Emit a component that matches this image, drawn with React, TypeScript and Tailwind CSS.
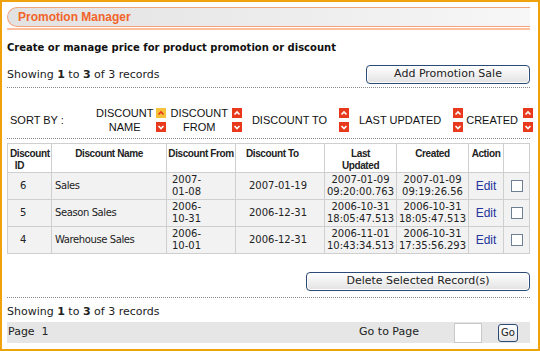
import React from 'react';

interface Promo {
  id: number;
  name: string;
  from: string[];
  to: string;
  updated: string[];
  created: string[];
}

const rows: Promo[] = [
  { id: 6, name: 'Sales', from: ['2007-', '01-08'], to: '2007-01-19', updated: ['2007-01-09', '09:20:00.763'], created: ['2007-01-09', '09:19:26.56'] },
  { id: 5, name: 'Season Sales', from: ['2006-', '10-31'], to: '2006-12-31', updated: ['2006-10-31', '18:05:47.513'], created: ['2006-10-31', '18:05:47.513'] },
  { id: 4, name: 'Warehouse Sales', from: ['2006-', '10-01'], to: '2006-12-31', updated: ['2006-11-01', '10:43:34.513'], created: ['2006-10-31', '17:35:56.293'] },
];

const arial = { fontFamily: '"Liberation Sans", Arial, sans-serif' };

// little red sort arrows
const SortIcon = ({ dir, active = false }: { dir: 'up' | 'down'; active?: boolean }) => (
  <svg width="10" height="10" viewBox="0 0 10 10" className="block">
    <rect width="10" height="10" fill={active ? '#f6c23a' : '#e8391c'} />
    <path
      d={dir === 'up' ? 'M2.5 6.5 L5 4 L7.5 6.5' : 'M2.5 4 L5 6.5 L7.5 4'}
      fill="none"
      stroke={active ? '#e8391c' : '#fff'}
      strokeWidth="1.6"
    />
  </svg>
);

const SortArrows = ({ active = false }: { active?: boolean }) => (
  <div className="flex flex-col gap-[4px] shrink-0">
    <SortIcon dir="up" active={active} />
    <SortIcon dir="down" />
  </div>
);

const Showing = () => (
  <p className="text-[11px] leading-[14px] text-[#222]">
    Showing <b>1</b> to <b>3</b> of 3 records
  </p>
);

const btn =
  'h-[19px] rounded-[4px] border border-[#2b4a75] bg-gradient-to-b from-white to-[#e2e2e2] text-[11px] text-[#222] shadow-[inset_0_0_0_1px_#fff]';

const App: React.FC = () => {
  const th = 'border border-[#cfcfcf] align-top pt-[4px] text-[10px] tracking-[-0.4px] font-bold text-[#222] leading-[12px]';
  const td = 'border border-[#cfcfcf] text-[10px] leading-[12px] text-[#222]';

  return (
    <div
      className="w-[540px] h-[351px] bg-white border-2 border-[#efa20b] overflow-hidden px-[5px] pt-[5px]"
      style={{ fontFamily: '"DejaVu Sans", Verdana, sans-serif' }}
    >
      {/* Title bar */}
      <div className="h-[20px] w-[523px] rounded-l-[10px] border border-[#f4a27a] border-r-0 bg-gradient-to-r from-[#e2e2e2] via-[#ececec] to-[#f7f7f7] flex items-center pl-[10px]">
        <span className="text-[12px] font-bold text-[#f2642a]" style={arial}>
          Promotion Manager
        </span>
      </div>
      <div className="h-[2px] w-[523px] bg-[#ffbf9c] mt-[1px]" />

      <p className="mt-[12px] text-[10px] leading-[12px] font-bold text-[#111]">
        Create or manage price for product promotion or discount
      </p>

      <div className="mt-[11px] h-[19px] flex items-center justify-between w-[523px]">
        <Showing />
        <button className={`${btn} w-[164px]`}>Add Promotion Sale</button>
      </div>

      <div className="mt-[3px] w-[523px] border-t border-dotted border-[#888]" />

      {/* Sort row */}
      <div className="h-[50px] pt-[14px] w-[523px] flex items-center text-[11px] leading-[14px] text-[#111]" style={arial}>
        <span className="ml-[3px] w-[86px] shrink-0">SORT BY :</span>
        <div className="flex items-center gap-[3px]">
          <span className="text-center whitespace-nowrap">DISCOUNT<br />NAME</span>
          <SortArrows active />
        </div>
        <div className="flex items-center gap-[4px] ml-[4px]">
          <span className="text-center whitespace-nowrap">DISCOUNT<br />FROM</span>
          <SortArrows />
        </div>
        <div className="flex items-center gap-[12px] ml-[10px]">
          <span className="whitespace-nowrap">DISCOUNT TO</span>
          <SortArrows />
        </div>
        <div className="flex items-center gap-[12px] ml-[10px]">
          <span className="whitespace-nowrap">LAST UPDATED</span>
          <SortArrows />
        </div>
        <div className="flex items-center gap-[5px] ml-[3px]">
          <span className="whitespace-nowrap">CREATED</span>
          <SortArrows />
        </div>
      </div>

      <div className="w-[523px] border-t border-dotted border-[#888]" />

      {/* Table */}
      <table className="mt-[4px] w-[522px] border-collapse table-fixed">
        <colgroup>
          <col className="w-[44px]" />
          <col className="w-[115px]" />
          <col className="w-[69px]" />
          <col className="w-[89px]" />
          <col className="w-[72px]" />
          <col className="w-[72px]" />
          <col className="w-[35px]" />
          <col className="w-[26px]" />
        </colgroup>
        <thead style={arial}>
          <tr className="h-[27px] bg-white">
            <th className={`${th} text-left pl-[2px]`}>
              Discount<br />&nbsp;&nbsp;ID
            </th>
            <th className={th}>Discount Name</th>
            <th className={`${th} whitespace-nowrap`}>Discount From</th>
            <th className={`${th} text-left pl-[10px]`}>Discount To</th>
            <th className={th}>
              Last<br />Updated
            </th>
            <th className={th}>Created</th>
            <th className={th}>Action</th>
            <th className={th}></th>
          </tr>
        </thead>
        <tbody>
          {rows.map((r) => (
            <tr key={r.id} className="h-[27px] bg-[#f2f2f2]">
              <td className={`${td} pl-[12px]`}>{r.id}</td>
              <td className={`${td} pl-[3px] text-[9px] tracking-[-0.4px] text-[#3a3a9a]`}>{r.name}</td>
              <td className={`${td} pl-[5px]`}>
                {r.from[0]}
                <br />
                {r.from[1]}
              </td>
              <td className={`${td} text-center pr-[4px]`}>{r.to}</td>
              <td className={`${td} text-center`}>
                {r.updated[0]}
                <br />
                {r.updated[1]}
              </td>
              <td className={`${td} text-center`}>
                {r.created[0]}
                <br />
                {r.created[1]}
              </td>
              <td className={`${td} text-center`}>
                <a className="text-[12px] text-[#24349c]" style={arial}>
                  Edit
                </a>
              </td>
              <td className={`${td} text-center`}>
                <span className="inline-block w-[12px] h-[12px] border border-[#6f7f93] bg-white align-middle" />
              </td>
            </tr>
          ))}
        </tbody>
      </table>

      <div className="mt-[18px] flex justify-end w-[523px]">
        <button className={`${btn} w-[224px]`}>Delete Selected Record(s)</button>
      </div>

      <div className="mt-[6px] w-[523px] border-t border-dotted border-[#888]" />

      <div className="mt-[7px]">
        <Showing />
      </div>

      <div className="mt-[3px] h-[21px] w-[523px] bg-[#e6e6e6] flex items-center text-[11px] text-[#222]">
        <span className="ml-[1px]">Page&nbsp; 1</span>
        <span className="ml-auto">Go to Page</span>
        <span className="ml-[35px] w-[28px] h-[20px] bg-white border border-[#c8c8c8]" />
        <button className="ml-[16px] mr-[12px] w-[20px] h-[18px] rounded-[3px] border border-[#2b4a75] bg-gradient-to-b from-white to-[#e4e4e4] text-[10px] leading-none">
          Go
        </button>
      </div>
    </div>
  );
};

export default App;
